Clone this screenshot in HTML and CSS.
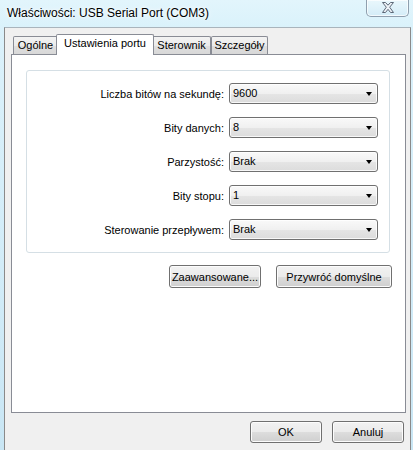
FILE: index.html
```html
<!DOCTYPE html>
<html lang="pl">
<head>
<meta charset="utf-8">
<title>Właściwości: USB Serial Port (COM3)</title>
<link rel="stylesheet" href="styles.css">
</head>
<body>
<div class="window">
  <div class="titlebar">
    <div class="title">Właściwości: USB Serial Port (COM3)</div>
    <div class="close">
      <svg width="14" height="11" viewBox="0 0 14 11">
        <path d="M1.5 0.5 H4.5 L7 3.2 L9.5 0.5 H12.5 L8.7 5.2 L12.5 10.5 H9.5 L7 7.3 L4.5 10.5 H1.5 L5.3 5.2 Z" fill="#eef3f8" stroke="#5d6877" stroke-width="1" stroke-linejoin="round"/>
      </svg>
    </div>
  </div>
  <div class="client">
    <div class="tabs">
      <div class="tab t1">Ogólne</div>
      <div class="tab t2 active">Ustawienia portu</div>
      <div class="tab t3">Sterownik</div>
      <div class="tab t4">Szczegóły</div>
    </div>
    <div class="panel">
      <div class="group">
        <div class="row"><span class="label">Liczba bitów na sekundę:</span><div class="combo"><span>9600</span><i class="arrow"></i></div></div>
        <div class="row"><span class="label">Bity danych:</span><div class="combo"><span>8</span><i class="arrow"></i></div></div>
        <div class="row"><span class="label">Parzystość:</span><div class="combo"><span>Brak</span><i class="arrow"></i></div></div>
        <div class="row"><span class="label">Bity stopu:</span><div class="combo"><span>1</span><i class="arrow"></i></div></div>
        <div class="row"><span class="label">Sterowanie przepływem:</span><div class="combo"><span>Brak</span><i class="arrow"></i></div></div>
      </div>
      <div class="panel-buttons">
        <div class="btn b-adv">Zaawansowane...</div>
        <div class="btn b-def">Przywróć domyślne</div>
      </div>
    </div>
    <div class="dialog-buttons">
      <div class="btn b-ok">OK</div>
      <div class="btn b-cancel">Anuluj</div>
    </div>
  </div>
</div>
</body>
</html>
```
FILE: styles.css
```css
* { box-sizing: border-box; }
html, body { margin: 0; padding: 0; }
body {
  width: 413px;
  height: 450px;
  overflow: hidden;
  background: linear-gradient(180deg, #dcf2fb 0%, #d2ecf8 60%, #c9e6f4 100%);
  font-family: "Liberation Sans", Arial, sans-serif;
  font-size: 11px;
  color: #000;
}
.window {
  display: flex;
  flex-direction: column;
  height: 450px;
}
.titlebar {
  height: 27px;
  display: flex;
  align-items: flex-start;
  justify-content: space-between;
  background: linear-gradient(180deg, #e2f5fc 0%, #daf2fb 100%);
}
.title {
  padding: 6px 0 0 7px;
  font-size: 12px;
  line-height: 14px;
  text-shadow: 0 0 6px #ffffff, 0 0 3px #ffffff;
}
.close {
  width: 43px;
  height: 17px;
  margin-right: 4px;
  border: 1px solid #8f9fae;
  border-top: none;
  border-radius: 0 0 5px 5px;
  background: linear-gradient(180deg, #e9f7fc 0%, #dff2fa 50%, #d4ecf7 100%);
  box-shadow: inset 0 0 0 1px rgba(255,255,255,0.7);
  display: flex;
  justify-content: center;
  padding-top: 2px;
}
.close svg { display: block; }
.client {
  height: 423px;
  margin: 0 2px 0 4px;
  border: 1px solid #8a8a8a;
  border-bottom: none;
  border-top-color: #a9b4bc;
  background: #f0f0f0;
  padding: 6px 4px 0 6px;
}
.tabs {
  position: relative;
  z-index: 2;
  display: flex;
  align-items: flex-end;
  height: 20px;
  padding-left: 2px;
}
.tab {
  height: 18px;
  border: 1px solid #898c95;
  border-bottom: none;
  border-radius: 2px 2px 0 0;
  background: linear-gradient(180deg, #f3f3f3 0%, #ebebeb 50%, #dfdfdf 51%, #d8d8d8 100%);
  text-align: center;
  line-height: 16px;
  white-space: nowrap;
}
.t1 { width: 45px; }
.t2 { width: 98px; }
.t3 { width: 59px; }
.t4 { width: 57px; }
.tab.active {
  height: 21px;
  margin: 0 -2px -1px;
  background: #ffffff;
  position: relative;
  z-index: 1;
}
.panel {
  height: 359px;
  border: 1px solid #898c95;
  background: #ffffff;
  padding: 15px 15px 0 14px;
}
.group {
  border: 1px solid #d5dfe5;
  border-radius: 3px;
  padding: 12px 11px 12px 12px;
  display: flex;
  flex-direction: column;
  gap: 13px;
}
.row {
  display: flex;
  justify-content: flex-end;
  align-items: center;
  gap: 5px;
}
.label { white-space: nowrap; }
.combo {
  width: 149px;
  height: 21px;
  border: 1px solid #707070;
  border-radius: 3px;
  background: linear-gradient(180deg, #f9f9f9 0%, #f0f0f0 50%, #e5e5e5 51%, #dcdcdc 100%);
  box-shadow: inset 0 0 0 1px rgba(255,255,255,0.8);
  display: flex;
  align-items: center;
  justify-content: space-between;
  padding: 0 5px 0 3px;
  line-height: 13px;
}
.arrow {
  display: block;
  width: 0;
  height: 0;
  border-left: 3.5px solid transparent;
  border-right: 3.5px solid transparent;
  border-top: 4px solid #000;
  margin-top: 1px;
}
.btn {
  height: 23px;
  border: 1px solid #707070;
  border-radius: 3px;
  background: linear-gradient(180deg, #f2f2f2 0%, #ebebeb 50%, #dddddd 51%, #cfcfcf 100%);
  box-shadow: inset 0 0 0 1px #fcfcfc;
  display: flex;
  align-items: center;
  justify-content: center;
  white-space: nowrap;
}
.panel-buttons {
  display: flex;
  justify-content: flex-end;
  gap: 15px;
  margin: 12px -2px 0 0;
}
.b-adv { width: 92px; }
.b-def { width: 116px; }
.dialog-buttons {
  display: flex;
  justify-content: flex-end;
  gap: 10px;
  margin-top: 8px;
  padding-right: 2px;
}
.b-ok, .b-cancel { width: 72px; height: 22px; }
```
